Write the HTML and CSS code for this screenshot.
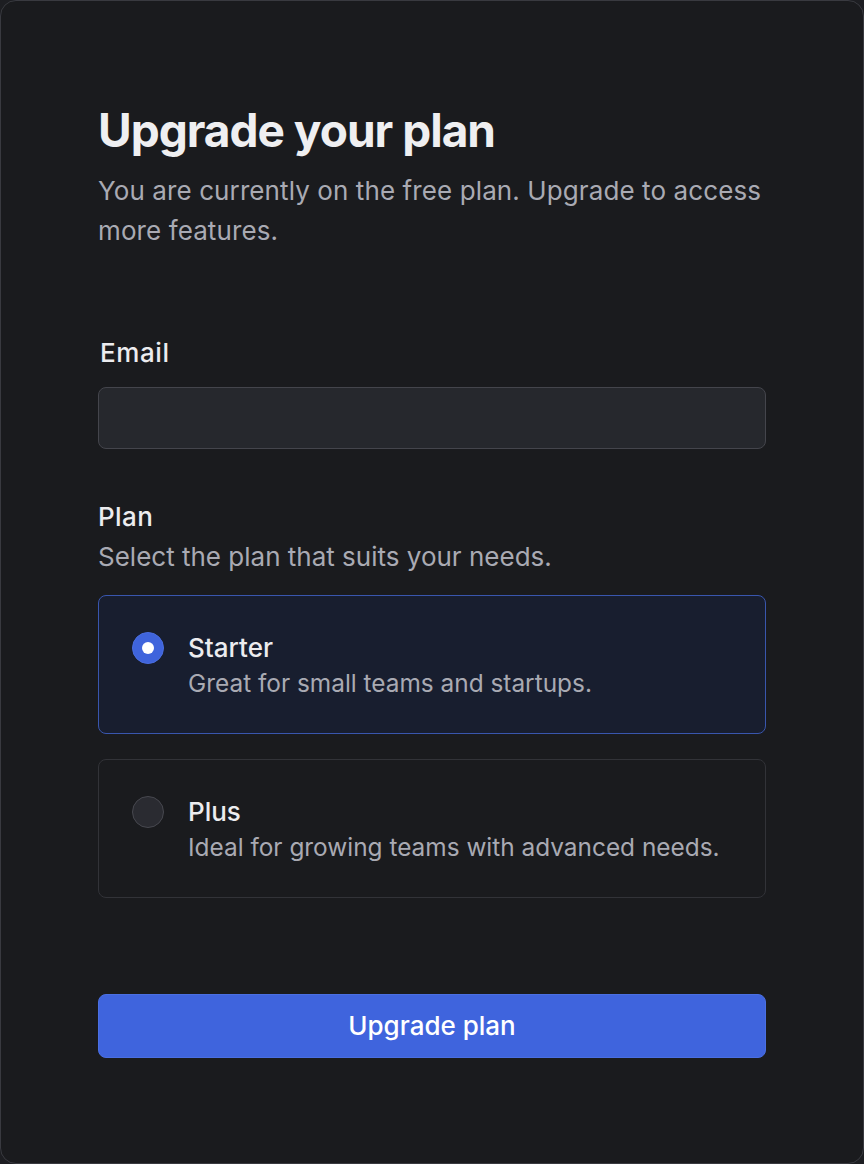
FILE: index.html
```html
<!DOCTYPE html>
<html lang="en">
<head>
<meta charset="utf-8">
<title>Upgrade your plan</title>
<link rel="stylesheet" href="styles.css">
</head>
<body>
<main class="card">
  <header class="head">
    <h1 class="title">Upgrade your plan</h1>
    <p class="subtitle">You are currently on the free plan. Upgrade to access more features.</p>
  </header>
  <form class="form">
    <div class="field">
      <label class="label label-email" for="email">Email</label>
      <input class="input" id="email" type="email">
    </div>
    <fieldset class="plans">
      <legend class="label">Plan</legend>
      <p class="hint">Select the plan that suits your needs.</p>
      <div class="options">
        <label class="option option-active">
          <span class="radio radio-on"><span class="dot"></span></span>
          <span class="option-text">
            <span class="option-name">Starter</span>
            <span class="option-desc">Great for small teams and startups.</span>
          </span>
        </label>
        <label class="option">
          <span class="radio"></span>
          <span class="option-text">
            <span class="option-name">Plus</span>
            <span class="option-desc">Ideal for growing teams with advanced needs.</span>
          </span>
        </label>
      </div>
    </fieldset>
    <button class="submit" type="button">Upgrade plan</button>
  </form>
</main>
</body>
</html>
```

FILE: styles.css
```css
* { box-sizing: border-box; }
html, body { margin: 0; padding: 0; }
body {
  background: #1d1e22;
  font-family: "Inter", "Liberation Sans", sans-serif;
  color: #ececef;
}
.card {
  width: 864px;
  height: 1164px;
  background: #1a1b1e;
  border: 1px solid #393a40;
  border-radius: 16px;
  padding: 100px 97px 0 97px;
  display: flex;
  flex-direction: column;
}
.head { display: flex; flex-direction: column; }
.title {
  margin: 0;
  font-size: 46px;
  line-height: 58px;
  font-weight: 700;
  color: #efeff1;
  letter-spacing: -1px;
}
.subtitle {
  margin: 12px 0 0 0;
  font-size: 26px;
  line-height: 40px;
  color: #a9aab3;
  letter-spacing: 0.1px;
}
.form { display: flex; flex-direction: column; margin-top: 85px; }
.field { display: flex; flex-direction: column; }
.label {
  font-size: 26px;
  line-height: 34px;
  font-weight: 500;
  color: #ececef;
  padding: 0;
  letter-spacing: 0.4px;
}
.label-email { padding-left: 2px; letter-spacing: 0.6px; }
.input {
  margin-top: 17px;
  height: 62px;
  background: #26282d;
  border: 1px solid #44454c;
  border-radius: 8px;
  width: 100%;
  font: inherit;
  color: #ececef;
  padding: 0 16px;
}
.plans {
  border: 0;
  margin: 51px 0 0 0;
  padding: 0;
  min-width: 0;
}
.plans legend { float: left; width: 100%; }
.hint {
  clear: both;
  margin: 0;
  padding-top: 5px;
  font-size: 26px;
  line-height: 36px;
  color: #a9aab3;
}
.options {
  display: flex;
  flex-direction: column;
  gap: 25px;
  margin-top: 20px;
}
.option {
  display: flex;
  align-items: flex-start;
  gap: 24px;
  height: 139px;
  padding: 34px 32px 0 33px;
  border: 1px solid #323338;
  border-radius: 8px;
  background: #1a1b1e;
}
.option-active {
  background: #181e2f;
  border-color: #3956ae;
}
.radio {
  flex: none;
  width: 32px;
  height: 32px;
  margin-top: 2px;
  border-radius: 50%;
  background: #2a2b31;
  border: 1.5px solid #47484f;
  display: flex;
  align-items: center;
  justify-content: center;
}
.radio-on {
  background: #3f64dc;
  border-color: #4a6ee0;
}
.dot {
  width: 12px;
  height: 12px;
  border-radius: 50%;
  background: #ffffff;
}
.option-text { display: flex; flex-direction: column; }
.option-name {
  font-size: 26px;
  line-height: 36px;
  font-weight: 500;
  color: #ececef;
}
.option-desc {
  font-size: 24.4px;
  line-height: 34px;
  color: #a9aab3;
}
.submit {
  margin-top: 96px;
  height: 64px;
  width: 100%;
  background: #3f64dd;
  border: 1px solid #4a6fe2;
  border-radius: 8px;
  color: #ffffff;
  font-family: inherit;
  font-size: 26px;
  line-height: 34px;
  font-weight: 500;
}
```
